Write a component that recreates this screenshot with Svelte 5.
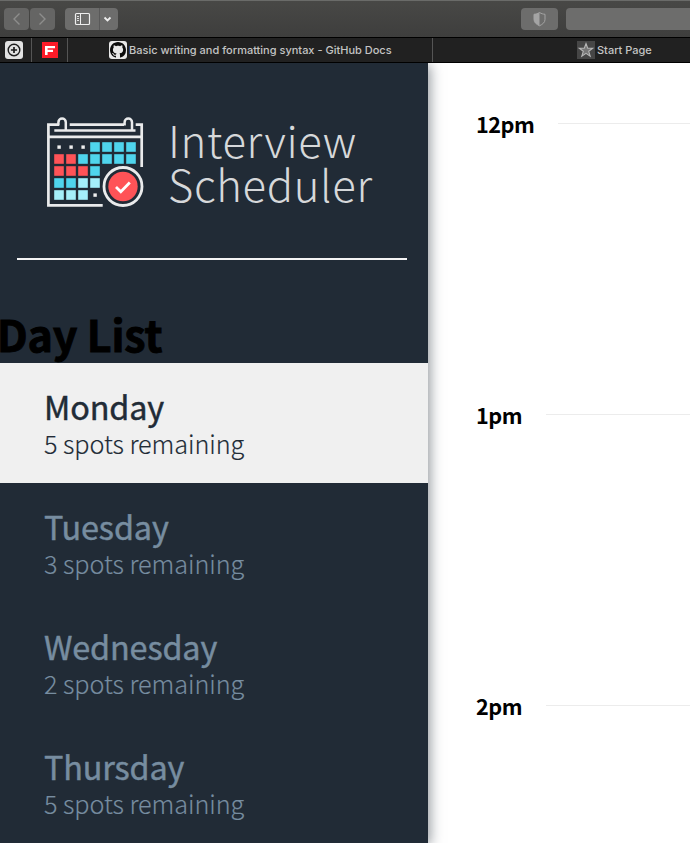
<script>
  const days = [
    { name: 'Monday', spots: 5 },
    { name: 'Tuesday', spots: 3 },
    { name: 'Wednesday', spots: 2 },
    { name: 'Thursday', spots: 5 }
  ];
  let selected = $state('Monday');
  const hours = ['12pm', '1pm', '2pm'];
  const red = '#ff5357', cyan = '#4fd5ed', pale = '#a4effa';
  const rows = ['...cccc', 'rrccccc', 'rrrc', 'ccpp', 'ppp.'];
  const cells = rows.flatMap((row, r) =>
    [...row].map((k, c) => ({ k, x: 8.2 + c * 12, y: 25.2 + r * 12 }))
  );
  const fills = { r: red, c: cyan, p: pale };
</script>

<div class="window">
  <div class="toolbar">
    <div class="btn nav"><svg width="26" height="22" viewBox="0 0 26 22"><path d="M15.5 5.500 10 11l5.500 5.500" stroke="#8d8d8c" stroke-width="1.400" /></svg></div>
    <div class="btn nav"><svg width="26" height="22" viewBox="0 0 26 22"><path d="M9.500 5.500 15 11l-5.500 5.500" stroke="#8d8d8c" stroke-width="1.400" /></svg></div>
    <div class="btn side">
      <svg width="53" height="22" viewBox="0 0 53 22">
        <path d="M34.500 0v22" stroke="#595959" />
        <rect x="10.500" y="5.500" width="14" height="11" rx="1" stroke="#eee" stroke-width="1.200" />
        <path d="M15.500 5.500v11" stroke="#eee" /><path d="M12 8.500h2M12 10.500h2M12 12.500h2" stroke="#ddd" />
        <path d="m39.500 9.500 3 3 3-3" stroke="#eee" stroke-width="1.800" />
      </svg>
    </div>
    <div class="btn shield">
      <svg width="37" height="22" viewBox="0 0 37 22">
        <path d="M18.500 4.500c2 1.200 3.500 1.600 5.500 1.800v5.200c0 3-2.500 4.800-5.500 6.300-3-1.500-5.500-3.300-5.500-6.300V6.300c2-.2 3.500-.6 5.500-1.800Z" stroke="#a4a4a4" />
        <path d="M18.500 4.500v13.300c-3-1.500-5.500-3.300-5.500-6.300V6.300c2-.2 3.500-.6 5.500-1.800Z" fill="#a4a4a4" />
      </svg>
    </div>
    <div class="btn address"></div>
  </div>

  <div class="tabs">
    <div class="tab t1">
      <svg width="18" height="18" viewBox="0 0 18 18"><rect width="18" height="18" rx="3" fill="#e2e2e2" /><circle cx="9" cy="9" r="5.800" stroke="#1d1d1d" stroke-width="1.400" /><path d="M9 5.900v6.200M5.900 9h6.200" stroke="#1d1d1d" stroke-width="1.700" /></svg>
    </div>
    <div class="tab t2">
      <svg width="16" height="16" viewBox="0 0 16 16"><rect width="16" height="16" fill="#fb1b28" /><path d="M3 4h10v2.300H5.600v1.400H11V10H5.600v3H3z" fill="#fff" /></svg>
    </div>
    <div class="tab t3">
      <svg width="18" height="18" viewBox="-1 -1 18 18"><rect x="-1" y="-1" width="18" height="18" rx="3" fill="#e8e8e8" /><path fill="#0b0b0b" d="M8 0C3.580 0 0 3.580 0 8c0 3.540 2.290 6.530 5.470 7.590.4.070.55-.17.55-.38 0-.19-.01-.82-.01-1.490-2.010.37-2.530-.49-2.690-.94-.09-.23-.48-.94-.82-1.130-.28-.15-.68-.52-.01-.53.63-.01 1.080.58 1.230.82.72 1.210 1.870.87 2.330.66.07-.52.28-.87.51-1.070-1.780-.2-3.640-.89-3.640-3.950 0-.87.31-1.590.82-2.150-.08-.2-.36-1.020.08-2.120 0 0 .67-.21 2.200.82.64-.18 1.320-.27 2-.27s1.360.09 2 .27c1.530-1.040 2.200-.82 2.200-.82.44 1.100.16 1.920.08 2.120.51.56.82 1.270.82 2.150 0 3.070-1.870 3.750-3.650 3.950.29.25.54.73.54 1.480 0 1.070-.01 1.930-.01 2.200 0 .21.15.46.55.38A8.010 8.010 0 0 0 16 8c0-4.420-3.580-8-8-8Z" /></svg>
      <span>Basic writing and formatting syntax - GitHub Docs</span>
    </div>
    <div class="tab t4">
      <svg width="18" height="18" viewBox="0 0 18 18"><rect width="18" height="18" fill="#464646" /><path d="m9 2.500 1.700 4.700 5 .1-4 3 1.500 4.900L9 12.300l-4.200 2.900 1.500-4.900-4-3 5-.1Z" fill="#777" stroke="#b7b7b7" stroke-width="1.100" /></svg>
      <span>Start Page</span>
    </div>
  </div>

  <div class="page">
    <aside>
      <div class="logo">
        <svg width="98" height="92" viewBox="0 0 98 92">
          <g stroke="#eaebec" stroke-width="2.700">
            <path d="M13 7.700H2.400V88.400H56.700" />
            <path d="M23.700 7.700H78M89.700 7.700H95.700V50" />
            <path d="M8.300 13.500H89.500" />
            <path d="M2 19.800h94" />
            <path d="M12.400 8.500V5.200a3.700 3.700 0 0 1 7.400 0V13M78.600 8.500V5.200a3.700 3.700 0 0 1 7.400 0V13" stroke-width="2.500" />
          </g>
          {#each cells as { k, x, y }}
            {#if k === '.'}
              <rect x={x + 3.2} y={y + 3.2} width="3.400" height="3.400" fill="#eee" />
            {:else}
              <rect {x} {y} width="9.600" height="9.600" fill={fills[k]} />
            {/if}
          {/each}
          <circle cx="77" cy="69.500" r="19" fill="#212b36" stroke="#eaebec" stroke-width="2.800" />
          <circle cx="77" cy="69.500" r="14.700" fill={red} />
          <path d="m70 70 4.800 4.700 9-9.200" stroke="#fff" stroke-width="2.800" />
        </svg>
        <div class="wordmark"><span>Interview</span><span class="w2">Scheduler</span></div>
      </div>
      <hr />
      <h2>Day List</h2>
      <ul>
        {#each days as day}
          <!-- svelte-ignore a11y_click_events_have_key_events, a11y_no_noninteractive_element_interactions -->
          <li class:selected={selected === day.name} onclick={() => (selected = day.name)}>
            <span class="name">{day.name}</span>
            <span class="spots">{day.spots} spots remaining</span>
          </li>
        {/each}
      </ul>
    </aside>
    <main>
      {#each hours as hour}
        <section><h4>{hour}</h4><i></i></section>
      {/each}
    </main>
  </div>
</div>

<style>
  :global(body) { margin: 0; }
  .window { width: 690px; height: 843px; overflow: hidden; display: flex; flex-direction: column; background: #fff; }
  svg { display: block; fill: none; flex: none; }
  .toolbar { box-sizing: border-box; height: 38px; flex: none; display: flex; padding: 7px 0 0 4px; background: linear-gradient(#484846, #3e3e3d); border-top: 1px solid #6a6b69; border-bottom: 1px solid #000; }
  .btn { height: 22px; border-radius: 4px; background: #6d6d6c; flex: none; overflow: hidden; }
  .nav { width: 25px; margin-right: 1px; background: #656564; }
  .side { width: 53px; margin-left: 9px; }
  .shield { width: 37px; margin-left: 403px; }
  .address { width: 140px; margin-left: 8px; }
  .tabs { box-sizing: border-box; height: 25px; flex: none; display: flex; background: #212121; border-bottom: 1px solid #000; font: 500 11px Inter, sans-serif; color: #c4c4c4; }
  .tab { box-sizing: border-box; height: 24px; display: flex; align-items: center; flex: none; white-space: nowrap; border-right: 1px solid #555; }
  .t1 { width: 32px; padding-left: 5px; }
  .t2 { width: 36px; padding-left: 10px; }
  .t3 { width: 365px; padding-left: 41px; }
  .t4 { width: 300px; padding-left: 144px; }
  .tab span { margin-left: 2px; }
  .page { flex: 1; display: flex; min-height: 0; font-family: "Noto Sans CJK SC", sans-serif; }
  aside { width: 428px; flex: none; background: #212b36; box-shadow: 2px 2px 12px rgba(33, 43, 54, .5); clip-path: inset(0 -20px 0 0); }
  .logo { display: flex; padding: 54px 0 0 46px; height: 141px; }
  .wordmark { display: flex; flex-direction: column; margin-left: 24px; font-size: 43.600px; line-height: 44px; font-weight: 300; color: #d6d8da; letter-spacing: .65px; }
  hr { margin: 0 21px 0 17px; border: 0; height: 2px; background: #f4f4f4; }
  h2 { margin: 49px 0 6px -3px; font-size: 43px; line-height: 48px; font-weight: 700; letter-spacing: -.2px; color: #000; white-space: nowrap; -webkit-text-stroke: .9px #000; }
  ul { list-style: none; margin: 0; padding: 0; }
  li { box-sizing: border-box; height: 120px; padding: 25px 0 0 44px; display: flex; flex-direction: column; gap: 5px; color: #778da0; white-space: nowrap; }
  .selected { background: #f0f0f0; color: #212b36; }
  .name { font-size: 32.400px; line-height: 36px; font-weight: 400; letter-spacing: -.15px; -webkit-text-stroke: .45px currentColor; }
  .spots { font-size: 25.200px; line-height: 28px; font-weight: 300; letter-spacing: -.05px; -webkit-text-stroke: .15px currentColor; }
  main { flex: 1; padding: 49px 0 0 48px; }
  section { height: 291px; display: flex; }
  h4 { margin: 0; font-size: 21.600px; line-height: 24px; font-weight: 700; letter-spacing: -.45px; color: #000; }
  i { flex: 1; height: 1px; margin: 11px 0 0 24px; background: #ececec; }
</style>
